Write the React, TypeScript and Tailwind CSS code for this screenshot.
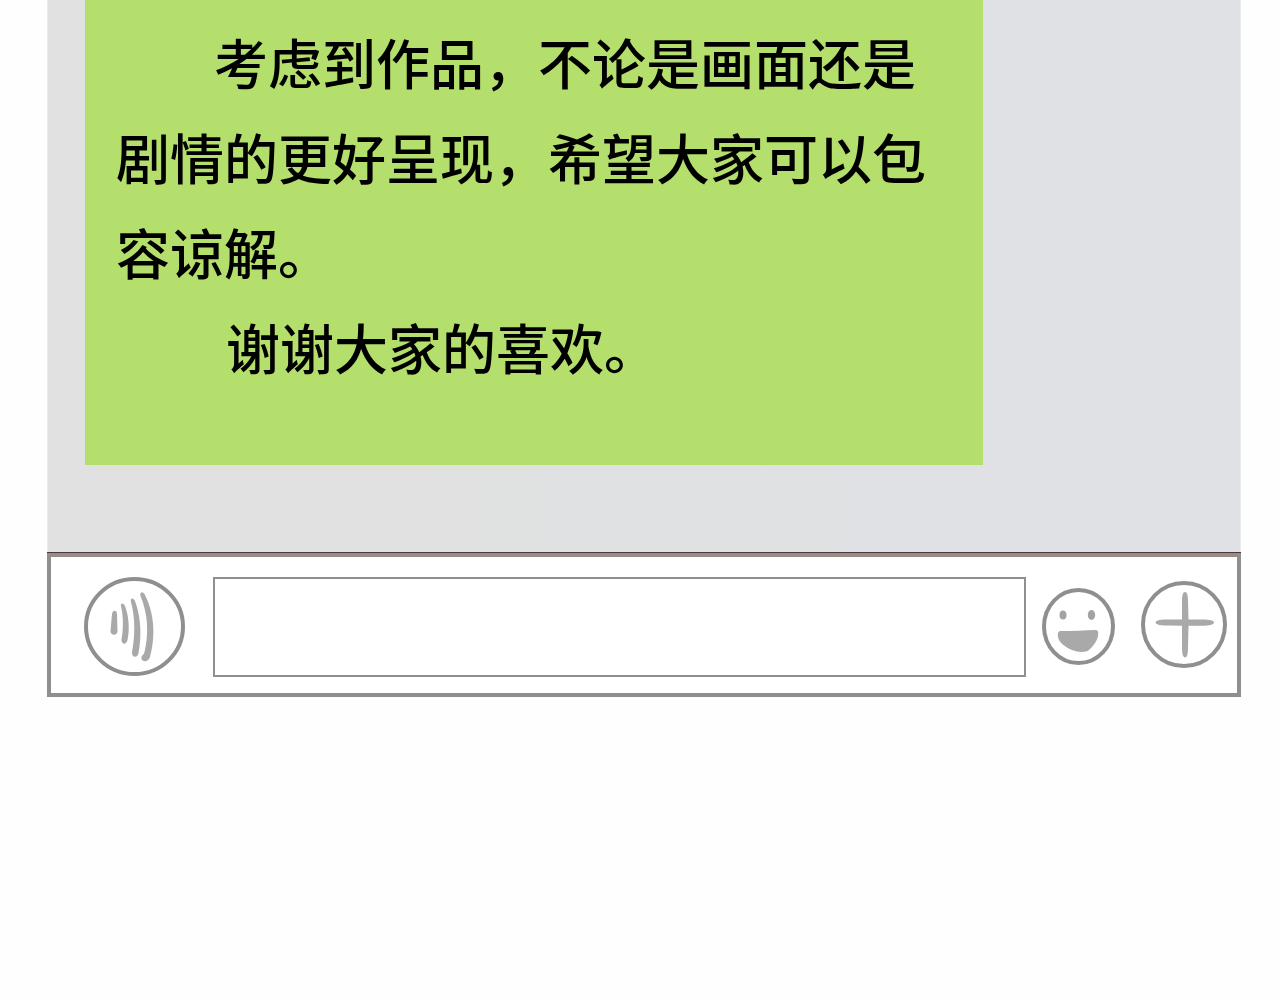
import { useState } from "react";

const paragraphs = [
  {
    text: "考虑到作品，不论是画面还是剧情的更好呈现，希望大家可以包容谅解。",
    indent: "indent-[98px]",
  },
  { text: "谢谢大家的喜欢。", indent: "indent-[110px]" },
];

function VoiceIcon() {
  return (
    <svg width="101" height="100" viewBox="0 0 101 100" fill="none" aria-hidden="true">
      <ellipse cx="50.5" cy="49.5" rx="48.5" ry="47.5" stroke="#8f8f8f" strokeWidth="4" />
      <g fill="#a9a9a9">
        <path d="M28 37 C28.500 32.500 33 32.500 33 37 L33.500 54 C33.500 59 26.500 59 26.500 54 Z" />
        <path d="M37 29 C36.500 25.500 39.500 25.500 41 29 C45.500 41 45.500 54 43.500 63 C42.500 68 37 68 37.500 62 C39.500 52 39.500 40 37 29Z" />
        <path d="M47 25 C46 20.500 49.500 20.500 51 24 C57.500 41 57.500 61 54.500 76 C53.500 81.500 47.500 81 48 75 C51 59 51.500 42 47 25Z" />
        <path d="M56.500 19 C55.500 14 59.500 14.500 61 18 C71.500 39 71 62 66 80 C64 86 56.500 85 57.500 80 C58 78 60 78 60.500 75 C65 56 64 37 56.500 19Z" />
      </g>
    </svg>
  );
}

function SmileIcon() {
  return (
    <svg width="73" height="78" viewBox="0 0 73 78" fill="none" aria-hidden="true">
      <ellipse cx="36.5" cy="38.5" rx="34.500" ry="36.500" stroke="#8f8f8f" strokeWidth="4" />
      <ellipse cx="21" cy="27" rx="3.500" ry="4.500" fill="#a3a3a3" />
      <ellipse cx="49.500" cy="27" rx="3.700" ry="5" fill="#a3a3a3" />
      <path
        d="M19 43 C31 43 43 42.500 53 42 C56.500 42 56.500 44 56 48 C55 54 50 59 47.500 61.500 C44 65 36 64.500 30 62 C24 59.500 17 55 16 49 C15.500 45 16 43 19 43Z"
        fill="#a9a9a9"
      />
    </svg>
  );
}

function PlusIcon() {
  return (
    <svg width="86" height="92" viewBox="0 0 86 92" fill="none" aria-hidden="true">
      <ellipse cx="43" cy="43.500" rx="41" ry="41.500" stroke="#8f8f8f" strokeWidth="4" />
      <path
        d="M14.500 41.500 C15 39 20 38.500 28 38.500 L41 38.500 L41 20 C41 14 42 11 44 11 C46 11 47 14 47 20 L47.500 38.500 L61 38.500 C69 38.500 73 39.500 73 41.500 C73 43.500 69 44.700 61 44.700 L47.500 44.700 L47 66 C47 73 46 76.500 44 76.500 C42 76.500 41 73 41 66 L41 44.700 L28 44.500 C20 44.500 15 44 14.500 41.500Z"
        fill="#a9a9a9"
      />
    </svg>
  );
}

export default function App() {
  const [message, setMessage] = useState("");

  return (
    <div className="min-h-screen bg-[#fefefe] pl-[47px] pr-[39px] font-['Noto_Sans_CJK_SC',sans-serif]">
      {/* Conversation */}
      <main className="border-x border-[#ebecec] bg-linear-to-r from-[#e1e1e1] from-30% to-[#e0e1e5] to-80% pb-[87px] pl-[37px]">
        <div className="max-w-[898px] bg-[#b5df6c] px-[31px] pt-[14px] pb-[71px] text-[54px] font-medium leading-[95px] text-black">
          {paragraphs.map((p) => (
            <p key={p.text} className={p.indent}>
              {p.text}
            </p>
          ))}
        </div>
      </main>

      {/* Composer */}
      <form
        className="border-t border-[#4d3a38]"
        onSubmit={(e) => {
          e.preventDefault();
          setMessage("");
        }}
      >
        <div className="flex items-center border-4 border-[#8f8f8f] border-t-[#988c89] bg-white pt-5 pr-[10px] pb-4 pl-[33px]">
          <button type="button" aria-label="语音" className="shrink-0">
            <VoiceIcon />
          </button>
          <input
            type="text"
            aria-label="消息"
            value={message}
            onChange={(e) => setMessage(e.target.value)}
            className="ml-7 h-[100px] min-w-0 flex-1 border-2 border-[#8f8f8f] bg-white px-4 text-[54px] outline-none"
          />
          <button type="button" aria-label="表情" className="ml-4 shrink-0">
            <SmileIcon />
          </button>
          <button type="button" aria-label="更多" className="ml-[26px] shrink-0">
            <PlusIcon />
          </button>
        </div>
      </form>
    </div>
  );
}
